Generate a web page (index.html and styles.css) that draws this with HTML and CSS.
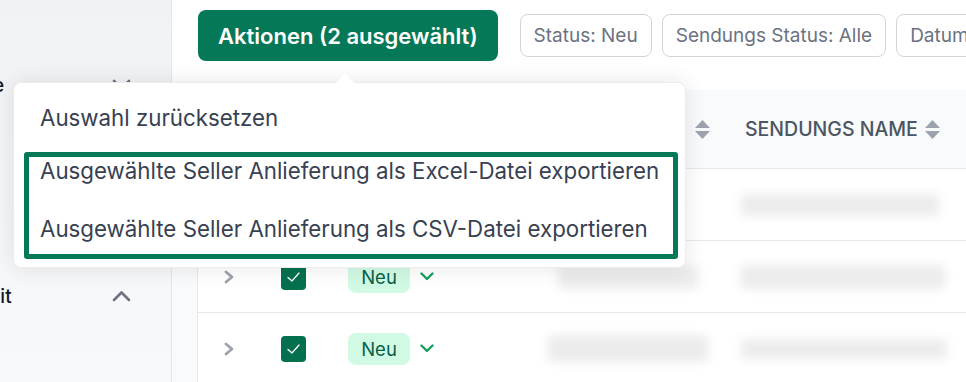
FILE: index.html
```html
<!DOCTYPE html>
<html lang="de">
<head>
  <meta charset="UTF-8" />
  <title>Seller Anlieferungen</title>
  <link rel="stylesheet" href="styles.css">
</head>
<body>
  <div class="app">
    <aside class="sidebar">
      <div class="filter-head">
        <span class="label label-first">Lieferadresse</span>
        <svg class="toggle" viewBox="0 0 19 12"><polyline points="2,2 9.5,9.5 17,2" /></svg>
      </div>
      <div class="filter-head">
        <span class="label label-second">Lieferzeit</span>
        <svg class="toggle" viewBox="0 0 19 12"><polyline points="2,10 9.5,2.5 17,10" /></svg>
      </div>
    </aside>

    <main class="main">
      <div class="toolbar">
        <button class="action-btn">Aktionen (2 ausgewählt)</button>
        <button class="chip">Status: Neu</button>
        <button class="chip">Sendungs Status: Alle</button>
        <button class="chip">Datum: Letzte 30 Tage</button>
      </div>

      <div class="content">
        <div class="table">
          <div class="row head">
            <div class="cell"></div>
            <div class="cell"></div>
            <div class="cell"></div>
            <div class="cell cell-end">
              EMPFÄNGER
              <svg class="sort" viewBox="0 0 15 19"><polygon points="7.5,0 15,8 0,8" /><polygon points="0,11 15,11 7.5,19" /></svg>
            </div>
            <div class="cell cell-name">
              SENDUNGS NAME
              <svg class="sort" viewBox="0 0 15 19"><polygon points="7.5,0 15,8 0,8" /><polygon points="0,11 15,11 7.5,19" /></svg>
            </div>
          </div>

          <div class="row">
            <div class="cell cell-expand"><svg class="expand" viewBox="0 0 10 14"><polyline points="2,2 8,7 2,12" /></svg></div>
            <div class="cell"><span class="check"><svg viewBox="0 0 25 26"><polyline points="7,13.5 11,17 18,9" /></svg></span></div>
            <div class="cell"><span class="badge">Neu</span><svg class="caret" viewBox="0 0 14 9"><polyline points="1.5,1.5 7,7 12.5,1.5" /></svg></div>
            <div class="cell cell-center"><span class="blur blur-r1a"></span></div>
            <div class="cell cell-blur"><span class="blur blur-r1b"></span></div>
          </div>

          <div class="row">
            <div class="cell cell-expand"><svg class="expand" viewBox="0 0 10 14"><polyline points="2,2 8,7 2,12" /></svg></div>
            <div class="cell"><span class="check"><svg viewBox="0 0 25 26"><polyline points="7,13.5 11,17 18,9" /></svg></span></div>
            <div class="cell"><span class="badge">Neu</span><svg class="caret" viewBox="0 0 14 9"><polyline points="1.5,1.5 7,7 12.5,1.5" /></svg></div>
            <div class="cell cell-center"><span class="blur blur-r2a"></span></div>
            <div class="cell cell-blur"><span class="blur blur-r2b"></span></div>
          </div>

          <div class="row">
            <div class="cell cell-expand"><svg class="expand" viewBox="0 0 10 14"><polyline points="2,2 8,7 2,12" /></svg></div>
            <div class="cell"><span class="check"><svg viewBox="0 0 25 26"><polyline points="7,13.5 11,17 18,9" /></svg></span></div>
            <div class="cell"><span class="badge">Neu</span><svg class="caret" viewBox="0 0 14 9"><polyline points="1.5,1.5 7,7 12.5,1.5" /></svg></div>
            <div class="cell cell-center"><span class="blur blur-r3a"></span></div>
            <div class="cell cell-blur"><span class="blur blur-r3b"></span></div>
          </div>
        </div>
      </div>
    </main>

    <!-- Aktionen dropdown -->
    <div class="menu">
      <div class="menu-item">Auswahl zurücksetzen</div>
      <div class="menu-group">
        <div class="menu-item">Ausgewählte Seller Anlieferung als Excel-Datei exportieren</div>
        <div class="menu-item">Ausgewählte Seller Anlieferung als CSV-Datei exportieren</div>
      </div>
    </div>
  </div>
</body>
</html>
```

FILE: styles.css
```css
* {
  margin: 0;
  padding: 0;
  box-sizing: border-box;
}

body {
  font-family: Inter, "Noto Sans", sans-serif;
  width: 966px;
  height: 382px;
  overflow: hidden;
  background: #fff;
  color: #374151;
}

.app {
  position: relative;
  display: flex;
  height: 382px;
}

/* sidebar */

.sidebar {
  width: 172px;
  flex-shrink: 0;
  background: linear-gradient(#f1f2f4, #f8f9fa);
  border-right: 1px solid #e5e7eb;
  padding: 73px 40px 0 0;
  overflow: hidden;
}

.filter-head {
  display: flex;
  justify-content: space-between;
  align-items: center;
  height: 24px;
  font-size: 19px;
  font-weight: 500;
  color: #111827;
  white-space: nowrap;
}

.filter-head + .filter-head {
  margin-top: 187px;
}

.label-first {
  margin-left: -120px;
}

.label-second {
  margin-left: -73px;
}

.toggle {
  width: 19px;
  height: 12px;
  fill: none;
  stroke: #6b7280;
  stroke-width: 2.6;
  stroke-linecap: round;
  stroke-linejoin: round;
}

/* main */

.main {
  flex: 1;
  display: flex;
  flex-direction: column;
  overflow: hidden;
}

.toolbar {
  display: flex;
  align-items: center;
  gap: 10px;
  height: 90px;
  padding: 10px 0 29px 26px;
  background: #fff;
}

.action-btn {
  flex-shrink: 0;
  height: 51px;
  padding: 0 20px;
  margin-right: 12px;
  background: #047857;
  color: #fff;
  border: none;
  border-radius: 8px;
  font-family: inherit;
  font-size: 22px;
  font-weight: 600;
  white-space: nowrap;
}

.chip {
  flex-shrink: 0;
  height: 43px;
  padding: 0 13px;
  background: #fff;
  border: 1px solid #d1d5db;
  border-radius: 8px;
  font-family: inherit;
  font-size: 19px;
  color: #6b7280;
  white-space: nowrap;
}

.content {
  flex: 1;
  padding-left: 25px;
  background: #f9fafb;
}

.table {
  height: 100%;
  background: #fff;
  border-left: 1px solid #e5e7eb;
}

.row {
  display: grid;
  grid-template-columns: 62px 70px 200px 195px 1fr;
  height: 72px;
  border-bottom: 1px solid #e5e7eb;
}

.row.head {
  height: 79px;
  background: #f9fafb;
}

.cell {
  display: flex;
  align-items: center;
  white-space: nowrap;
}

.head .cell {
  font-size: 19.5px;
  font-weight: 500;
  color: #4b5563;
  gap: 7px;
}

.head .cell-end {
  justify-content: flex-end;
  padding-right: 15px;
  gap: 12px;
}

.cell-name {
  padding-left: 20px;
}

.sort {
  width: 15px;
  height: 19px;
  fill: #9ca3af;
  flex-shrink: 0;
}

.row .cell:nth-child(2) {
  padding-left: 21px;
}

.row .cell:nth-child(3) {
  padding-left: 18px;
  gap: 10px;
}

.cell-expand {
  justify-content: center;
}

.expand {
  width: 10px;
  height: 14px;
  fill: none;
  stroke: #9ca3af;
  stroke-width: 2.8;
  stroke-linecap: round;
  stroke-linejoin: round;
}

.check {
  display: block;
  width: 25px;
  height: 26px;
  background: #05704f;
  border-radius: 4px;
}

.check svg {
  display: block;
  width: 25px;
  height: 26px;
  fill: none;
  stroke: #fff;
  stroke-width: 1.3;
  stroke-linecap: round;
  stroke-linejoin: round;
}

.badge {
  display: inline-flex;
  align-items: center;
  justify-content: center;
  width: 62px;
  height: 32px;
  background: #d1fae5;
  color: #065f46;
  border-radius: 8px;
  font-size: 18.5px;
}

.caret {
  width: 14px;
  height: 9px;
  fill: none;
  stroke: #16a05a;
  stroke-width: 2.4;
  stroke-linecap: round;
  stroke-linejoin: round;
}

.cell-center {
  justify-content: center;
}

.cell-blur {
  padding-left: 16px;
}

.blur {
  display: block;
  background: #ececec;
  border-radius: 2px;
  filter: blur(5px);
}

.blur-r1a { width: 100px; height: 24px; }
.blur-r1b { width: 198px; height: 22px; }
.blur-r2a { width: 140px; height: 24px; }
.blur-r2b { width: 204px; height: 24px; }
.blur-r3a { width: 160px; height: 27px; }
.blur-r3b { width: 206px; height: 20px; }

/* dropdown */

.menu {
  position: absolute;
  left: 13px;
  top: 82px;
  width: 673px;
  height: 186px;
  padding: 21px 7px 8px 10px;
  background: #fff;
  border: 1px solid #ececec;
  border-radius: 8px;
  box-shadow: 0 0 22px rgba(0, 0, 0, 0.1);
}

.menu::before {
  content: "";
  position: absolute;
  top: -10px;
  left: 322px;
  border-left: 9px solid transparent;
  border-right: 9px solid transparent;
  border-bottom: 10px solid #fff;
}

.menu-item {
  line-height: 28px;
  font-size: 22.3px;
  color: #374151;
  padding-left: 16px;
  white-space: nowrap;
}

.menu > .menu-item {
  margin-bottom: 20px;
}

.menu-group {
  display: flex;
  flex-direction: column;
  gap: 30px;
  padding-bottom: 11px;
  border: 5px solid #047857;
  border-radius: 3px;
}

.menu-group .menu-item {
  padding-left: 11px;
}
```
